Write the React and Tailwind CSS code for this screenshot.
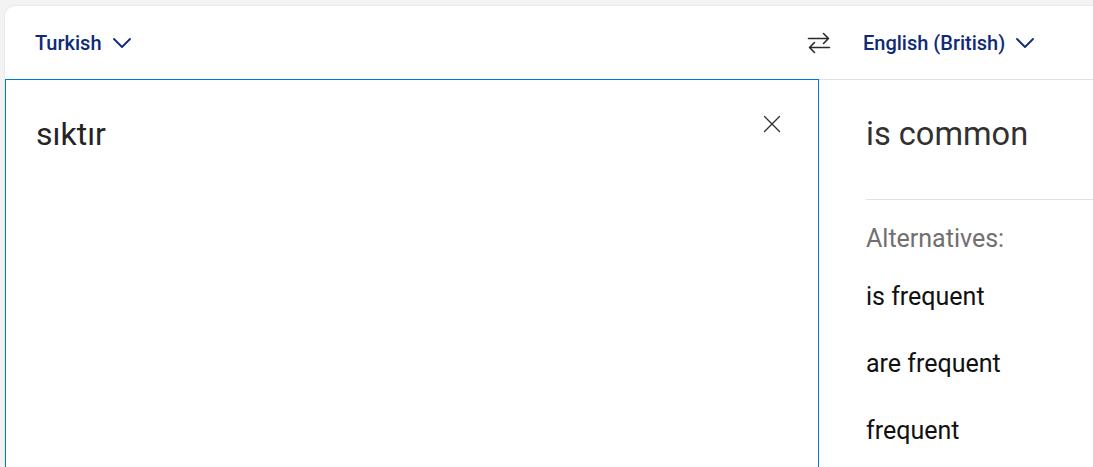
import { X } from "lucide-react";

const Chevron = () => (
  <svg width="18" height="10" viewBox="0 0 18 10" fill="none" className="shrink-0">
    <path d="M1 1l8 8 8-8" stroke="currentColor" strokeWidth="1.8" strokeLinecap="round" strokeLinejoin="round" />
  </svg>
);

const SwapIcon = () => (
  <svg width="24" height="24" viewBox="0 0 24 24" fill="none">
    <path d="M1.5 7.5h20M16.5 2.5l5 5-5 5" stroke="#2b2b2b" strokeWidth="1.6" strokeLinecap="round" strokeLinejoin="round" />
    <path d="M22.5 16.5h-20M7.5 11.5l-5 5 5 5" stroke="#2b2b2b" strokeWidth="1.6" strokeLinecap="round" strokeLinejoin="round" />
  </svg>
);

const alternatives = ["is frequent", "are frequent", "frequent"];

export default function App() {
  return (
    <div
      className="h-[467px] w-[1093px] overflow-hidden bg-[#f3f3f3] pl-[5px] pt-[6px]"
      style={{ fontFamily: "Roboto, 'Noto Sans', sans-serif" }}
    >
      <div className="flex h-full w-[1120px] flex-col rounded-tl-[10px] bg-white shadow-[0_0_2px_rgba(0,0,0,0.12)]">
        {/* Language bar */}
        <div className="flex h-[74px] shrink-0 items-center border-b border-[#e1e1e1]">
          <div className="flex w-[790px] items-center pl-[30px]">
            <button className="flex items-center gap-[11px] text-[20px] font-medium text-[#0e2a78]">
              Turkish
              <Chevron />
            </button>
          </div>
          <button className="flex w-[48px] items-center justify-center">
            <SwapIcon />
          </button>
          <button className="ml-[20px] flex items-center gap-[11px] text-[20px] font-medium text-[#0e2a78]">
            English (British)
            <Chevron />
          </button>
        </div>

        <div className="flex flex-1">
          {/* Source */}
          <div className="-mt-px flex w-[814px] shrink-0 items-start justify-between border border-b-0 border-[#0078d4] pl-[30px] pr-[36px] pt-[34px]">
            <div className="text-[32px] leading-[40px] text-[#242424]">sıktır</div>
            <button className="-mr-[5px] -mt-[5px] text-[#333]">
              <X size={30} strokeWidth={1.1} />
            </button>
          </div>

          {/* Target */}
          <div className="flex-1 pl-[47px] pt-[34px]">
            <div className="text-[32.6px] leading-[40px] text-[#323130]">is common</div>
            <div className="mt-[45px] border-t border-[#e1e1e1]" />
            <div className="mt-[23px] text-[25px] leading-[32px] text-[#707070]">Alternatives:</div>
            <div className="mt-[26px] flex flex-col gap-[35px]">
              {alternatives.map((alt) => (
                <div key={alt} className="text-[25px] leading-[32px] text-[#111]">
                  {alt}
                </div>
              ))}
            </div>
          </div>
        </div>
      </div>
    </div>
  );
}
